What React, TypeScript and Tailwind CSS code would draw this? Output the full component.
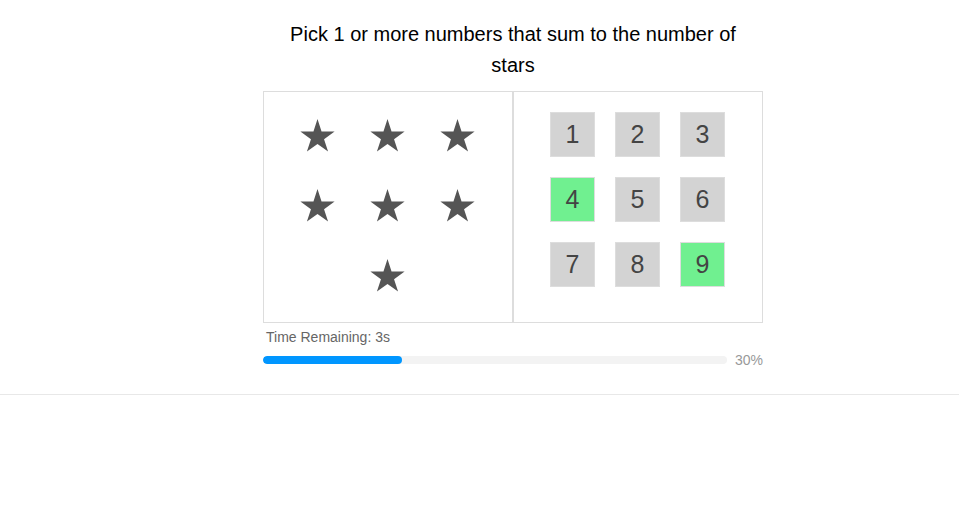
import React from 'react';

const STAR_COUNT = 7;
const numbers = [1, 2, 3, 4, 5, 6, 7, 8, 9];
const picked = [4, 9];
const percent = 30;

const Star: React.FC = () => (
  <svg width="35" height="33" viewBox="-0.5 0 35 33">
    <path
      d="M17 0 L21.04 12.43 L34.12 12.44 L23.54 20.13 L27.58 32.56 L17 24.88 L6.42 32.56 L10.46 20.13 L-0.12 12.44 L12.96 12.43 Z"
      fill="#555"
    />
  </svg>
);

export default function App() {
  return (
    <div className="min-h-screen bg-white font-['Liberation_Sans',Arial,sans-serif]">
      <div className="border-b border-[#e8e8e8] pb-[24px]">
        <div className="w-[500px] ml-[263px] pt-[19px]">
          <h1 className="w-[460px] mx-auto text-center text-[20px] leading-[31px] text-black font-normal">
            Pick 1 or more numbers that sum to the number of stars
          </h1>

          <div className="mt-[10px] flex">
            <div className="w-[250px] h-[232px] border border-[#ddd] pt-[8px] pl-[18px]">
              <div className="w-[210px] flex flex-wrap justify-center">
                {Array.from({ length: STAR_COUNT }).map((_, i) => (
                  <div key={i} className="w-[70px] h-[70px] flex items-center justify-center">
                    <Star />
                  </div>
                ))}
              </div>
            </div>
            <div className="w-[250px] h-[232px] border border-[#ddd] pt-[20px] pl-[36px]">
              <div className="grid grid-cols-[repeat(3,45px)] gap-[20px]">
                {numbers.map((n) => (
                  <div
                    key={n}
                    className={`w-[45px] h-[45px] border border-[#ddd] flex items-center justify-center text-[25px] text-[#444] ${
                      picked.includes(n) ? 'bg-[#70f090]' : 'bg-[#d3d3d3]'
                    }`}
                  >
                    {n}
                  </div>
                ))}
              </div>
            </div>
          </div>

          <div className="mt-[4px] pl-[3px] text-[14px] leading-[20px] text-[#666]">
            Time Remaining: 3s
          </div>

          <div className="mt-[3px] flex items-center h-[20px]">
            <div className="flex-1 h-[8px] rounded-full bg-[#f3f3f3] overflow-hidden">
              <div className="h-full rounded-full bg-[#0096ff]" style={{ width: `${percent}%` }} />
            </div>
            <span className="ml-[8px] w-[28px] text-[14px] leading-[20px] text-[#999] whitespace-nowrap">
              {percent}%
            </span>
          </div>
        </div>
      </div>
    </div>
  );
}
